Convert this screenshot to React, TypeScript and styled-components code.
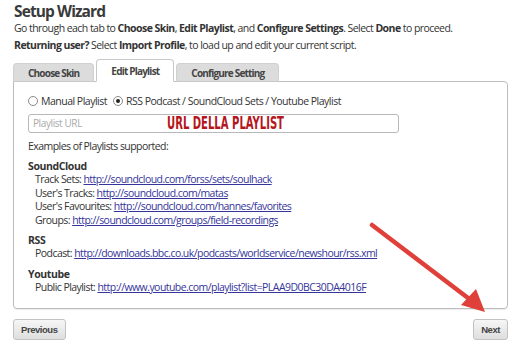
import * as React from 'react';
import styled, { createGlobalStyle } from 'styled-components';

const GlobalStyle = createGlobalStyle`
  body {
    margin: 0;
    background: #fff;
    font-family: 'Open Sans', 'Noto Sans', sans-serif;
    color: #333;
  }
`;

const Page = styled.div`
  position: relative;
  width: 521px;
  height: 347px;
  padding: 0 13px;
  box-sizing: border-box;
  overflow: hidden;
`;

const Title = styled.h1`
  margin: 0;
  padding: 2px 0 0 1px;
  font-size: 15.5px;
  line-height: 18px;
  font-weight: 700;
  letter-spacing: -0.9px;
  color: #3a3a3a;
`;

const Intro = styled.p`
  margin: 0 0 0 1px;
  font-size: 10.5px;
  line-height: 17px;
  letter-spacing: -0.55px;
  color: #333;
  white-space: nowrap;
`;

const TabBar = styled.div`
  display: flex;
  align-items: flex-end;
  gap: 2px;
  margin-top: 6px;
  height: 21px;
`;

const Tab = styled.div<{ $active?: boolean }>`
  height: ${p => (p.$active ? 21 : 17)}px;
  padding: 0 14px;
  display: flex;
  align-items: center;
  font-size: 10px;
  font-weight: 700;
  letter-spacing: -0.8px;
  color: #444;
  background: ${p => (p.$active ? '#fff' : '#dcdcdc')};
  border: 1px solid ${p => (p.$active ? '#c8c8c8' : '#d0d0d0')};
  border-bottom: 1px solid ${p => (p.$active ? '#fff' : '#c8c8c8')};
  border-radius: 4px 4px 0 0;
  margin-bottom: -1px;
  position: relative;
  z-index: ${p => (p.$active ? 2 : 1)};
`;

const Panel = styled.div`
  border: 1px solid #bdbdbd;
  border-radius: 0 4px 4px 4px;
  height: 228px;
  box-sizing: border-box;
  padding: 11px 14px 0 14px;
  box-shadow: 0 1px 1px rgba(0, 0, 0, 0.08);
`;

const RadioRow = styled.div`
  display: flex;
  align-items: center;
  gap: 3px;
  font-size: 10.5px;
  line-height: 16px;
  letter-spacing: -0.5px;
  white-space: nowrap;
`;

const Radio = styled.span<{ $checked?: boolean }>`
  width: 8px;
  height: 8px;
  border-radius: 50%;
  border: 1px solid #8a8a8a;
  display: inline-flex;
  align-items: center;
  justify-content: center;
  margin-left: ${p => (p.$checked ? 3 : 0)}px;
  &::after {
    content: '';
    display: ${p => (p.$checked ? 'block' : 'none')};
    width: 4px;
    height: 4px;
    border-radius: 50%;
    background: #222;
  }
`;

const InputWrap = styled.div`
  position: relative;
  margin-top: 5px;
  width: 371px;
`;

const UrlInput = styled.div`
  height: 19px;
  border: 1px solid #b8b8b8;
  border-radius: 3px;
  box-sizing: border-box;
  padding: 0 0 0 4px;
  font-size: 10px;
  line-height: 17px;
  letter-spacing: -0.4px;
  color: #aaa;
`;

const Overlay = styled.div`
  position: absolute;
  left: 139px;
  top: -1px;
  font-family: 'DejaVu Sans', sans-serif;
  font-stretch: condensed;
  font-weight: 700;
  font-size: 18px;
  line-height: 20px;
  color: #b5161c;
  white-space: nowrap;
  transform: scaleX(0.62);
  transform-origin: left center;
`;

const Text = styled.div<{ $mt?: number; $indent?: boolean; $bold?: boolean }>`
  margin-top: ${p => p.$mt ?? 0}px;
  padding-left: ${p => (p.$indent ? 7 : 0)}px;
  font-size: 10.5px;
  line-height: 13.4px;
  letter-spacing: ${p => (p.$bold ? -0.4 : -0.55)}px;
  font-weight: ${p => (p.$bold ? 700 : 400)};
  color: #333;
  white-space: nowrap;
`;

const Link = styled.a`
  color: #34349a;
  text-decoration: underline;
`;

const Footer = styled.div`
  display: flex;
  justify-content: space-between;
  margin-top: 10px;
`;

const Button = styled.div`
  height: 21px;
  box-sizing: border-box;
  padding: 0 7px;
  display: flex;
  align-items: center;
  font-family: 'Liberation Sans', Arial, sans-serif;
  font-size: 9.5px;
  font-weight: 700;
  color: #444;
  letter-spacing: -0.45px;
  background: linear-gradient(#f6f6f6, #dedede);
  border: 1px solid #c2c2c2;
  border-radius: 3px;
`;

const Arrow = styled.svg`
  position: absolute;
  left: 0;
  top: 0;
  pointer-events: none;
`;

export default function App() {
  return (
    <Page>
      <GlobalStyle />
      <Title>Setup Wizard</Title>
      <Intro>
        Go through each tab to <b>Choose Skin</b>, <b>Edit Playlist</b>, and <b>Configure Settings</b>. Select{' '}
        <b>Done</b> to proceed.
        <br />
        <b>Returning user?</b> Select <b>Import Profile</b>, to load up and edit your current script.
      </Intro>
      <TabBar>
        <Tab>Choose Skin</Tab>
        <Tab $active>Edit Playlist</Tab>
        <Tab>Configure Setting</Tab>
      </TabBar>
      <Panel>
        <RadioRow>
          <Radio />
          <span>Manual Playlist</span>
          <Radio $checked />
          <span>RSS Podcast / SoundCloud Sets / Youtube Playlist</span>
        </RadioRow>
        <InputWrap>
          <UrlInput>Playlist URL</UrlInput>
          <Overlay>URL DELLA PLAYLIST</Overlay>
        </InputWrap>
        <Text $mt={7}>Examples of Playlists supported:</Text>
        <Text $mt={6.5} $bold>SoundCloud</Text>
        <Text $indent>
          Track Sets: <Link>http://soundcloud.com/forss/sets/soulhack</Link>
        </Text>
        <Text $indent>
          User's Tracks: <Link>http://soundcloud.com/matas</Link>
        </Text>
        <Text $indent>
          User's Favourites: <Link>http://soundcloud.com/hannes/favorites</Link>
        </Text>
        <Text $indent>
          Groups: <Link>http://soundcloud.com/groups/field-recordings</Link>
        </Text>
        <Text $mt={7} $bold>RSS</Text>
        <Text $indent>
          Podcast: <Link>http://downloads.bbc.co.uk/podcasts/worldservice/newshour/rss.xml</Link>
        </Text>
        <Text $mt={7} $bold>Youtube</Text>
        <Text $indent>
          Public Playlist: <Link>http://www.youtube.com/playlist?list=PLAA9D0BC30DA4016F</Link>
        </Text>
      </Panel>
      <Footer>
        <Button>Previous</Button>
        <Button>Next</Button>
      </Footer>
      <Arrow width="521" height="347" viewBox="0 0 521 347">
        <line x1="372" y1="225" x2="472" y2="301" stroke="#e0403a" strokeWidth="4.5" strokeLinecap="round" />
        <polygon points="485,312 461,305 476,289" fill="#e0403a" />
      </Arrow>
    </Page>
  );
}
